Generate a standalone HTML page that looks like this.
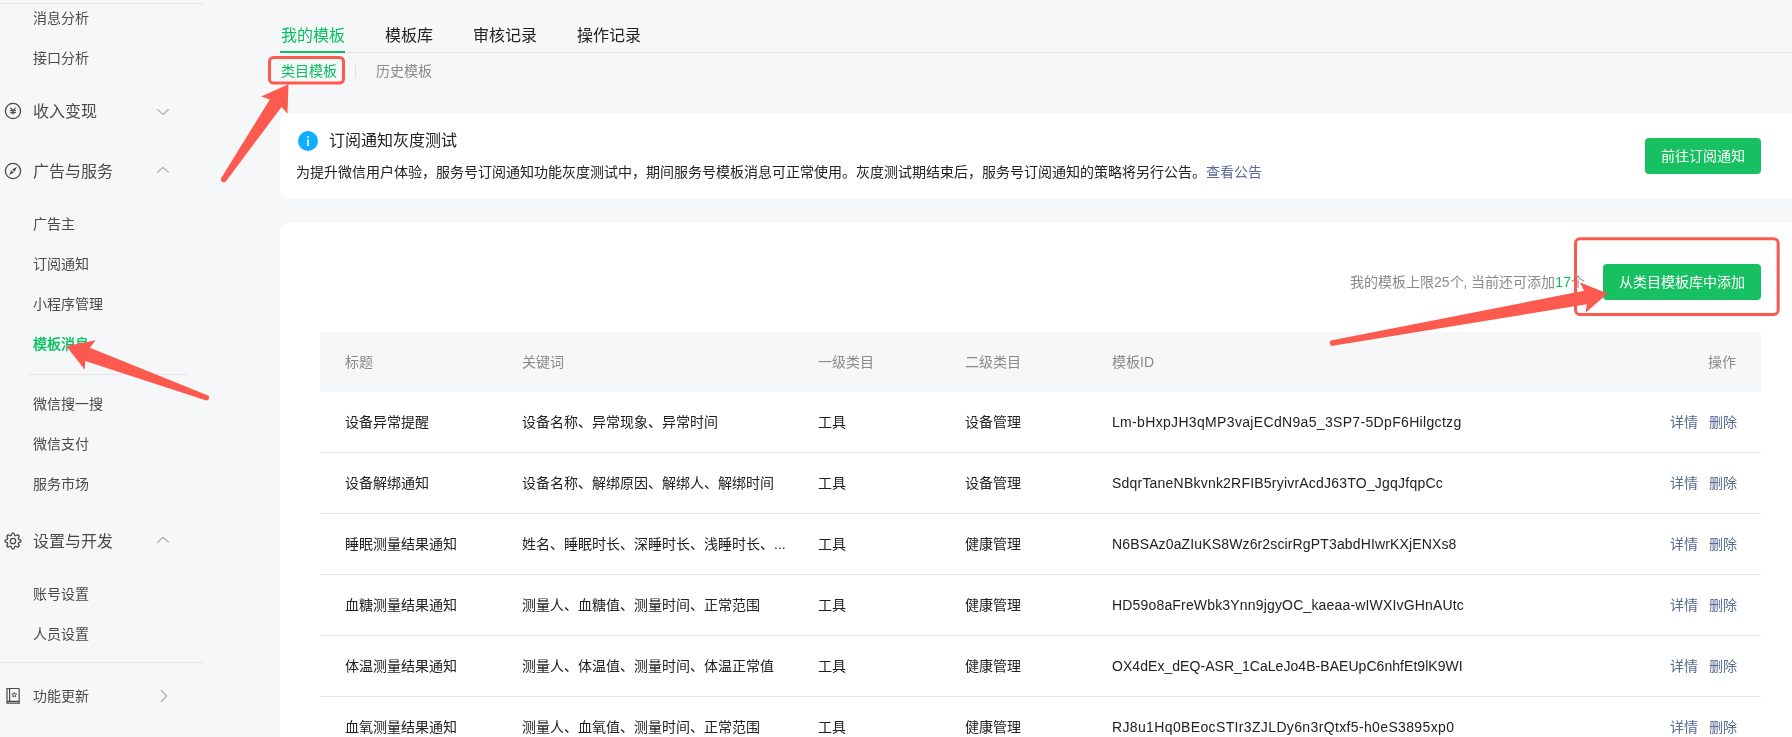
<!DOCTYPE html>
<html lang="zh-CN">
<head>
<meta charset="utf-8">
<style>
*{margin:0;padding:0;box-sizing:border-box}
html,body{width:1792px;height:737px;overflow:hidden;background:#f6f7f9}
body{position:relative;-webkit-font-smoothing:antialiased;font-family:"Liberation Sans",sans-serif;color:#353535}
.a{position:absolute;white-space:nowrap;line-height:1}
.side{font-size:14px;color:#4a4a4a}
.sec{font-size:16px;color:#4a4a4a}
.hr{position:absolute;height:1px;background:#e4e6e9}
.tab{font-size:16px;color:#222}
.card{position:absolute;background:#fff;border-radius:8px}
.btn{position:absolute;background:#17c161;color:#fff;font-size:14px;border-radius:4px;text-align:center}
.th{font-size:14px;color:#8a8a8a}
.td{font-size:14px;color:#222}
.lk{color:#576b95}
</style>
</head>
<body>
<div id="wrap" style="position:absolute;left:0;top:0;width:1792px;height:737px;will-change:transform">
<!-- sidebar -->
<div class="hr" style="left:0;top:3px;width:203px"></div>
<div class="a side" style="left:33px;top:11px">消息分析</div>
<div class="a side" style="left:33px;top:51px">接口分析</div>
<div class="a sec" style="left:33px;top:104px">收入变现</div>
<div class="a sec" style="left:33px;top:164px">广告与服务</div>
<div class="a side" style="left:33px;top:217px">广告主</div>
<div class="a side" style="left:33px;top:257px">订阅通知</div>
<div class="a side" style="left:33px;top:297px">小程序管理</div>
<div class="a side" style="left:33px;top:337px;color:#07c160;-webkit-text-stroke:0.4px #07c160">模板消息</div>
<div class="hr" style="left:29px;top:374px;width:158px"></div>
<div class="a side" style="left:33px;top:397px">微信搜一搜</div>
<div class="a side" style="left:33px;top:437px">微信支付</div>
<div class="a side" style="left:33px;top:477px">服务市场</div>
<div class="a sec" style="left:33px;top:534px">设置与开发</div>
<div class="a side" style="left:33px;top:587px">账号设置</div>
<div class="a side" style="left:33px;top:627px">人员设置</div>
<div class="hr" style="left:0;top:662px;width:203px"></div>
<div class="a side" style="left:33px;top:689px">功能更新</div>

<!-- tabs -->
<div class="a tab" style="left:281px;top:28px;color:#07c160">我的模板</div>
<div class="a tab" style="left:385px;top:28px">模板库</div>
<div class="a tab" style="left:473px;top:28px">审核记录</div>
<div class="a tab" style="left:577px;top:28px">操作记录</div>
<div class="hr" style="left:280px;top:52px;width:1512px;background:#e0e2e5"></div>
<div class="a" style="left:280px;top:51px;width:65px;height:2px;background:#07c160"></div>
<div class="a" style="left:281px;top:64px;font-size:14px;color:#07c160">类目模板</div>
<div class="a" style="left:355px;top:64px;width:1px;height:14px;background:#e0e2e5"></div>
<div class="a" style="left:376px;top:64px;font-size:14px;color:#8a8a8a">历史模板</div>

<!-- notice card -->
<div class="card" style="left:280px;top:113px;width:1520px;height:86px"></div>
<div class="a" style="left:329px;top:133px;font-size:16px;color:#222">订阅通知灰度测试</div>
<div class="a" style="left:296px;top:165px;font-size:14px;color:#222">为提升微信用户体验，服务号订阅通知功能灰度测试中，期间服务号模板消息可正常使用。灰度测试期结束后，服务号订阅通知的策略将另行公告。<span class="lk">查看公告</span></div>
<div class="btn" style="left:1645px;top:138px;width:116px;height:36px;line-height:36px">前往订阅通知</div>

<!-- main card -->
<div class="card" style="left:280px;top:223px;width:1520px;height:600px"></div>
<div class="a" style="left:1350px;top:275px;font-size:14px;color:#8a8a8a">我的模板上限25个, 当前还可添加<span style="color:#07c160">17</span>个</div>
<div class="btn" style="left:1603px;top:264px;width:158px;height:36px;line-height:36px">从类目模板库中添加</div>

<!-- table -->
<div class="a" style="left:320px;top:332px;width:1441px;height:60px;background:#f6f7f9"></div>
<div class="a th" style="left:345px;top:355px">标题</div>
<div class="a th" style="left:522px;top:355px">关键词</div>
<div class="a th" style="left:818px;top:355px">一级类目</div>
<div class="a th" style="left:965px;top:355px">二级类目</div>
<div class="a th" style="left:1112px;top:355px">模板ID</div>
<div class="a th" style="left:1708px;top:355px">操作</div>

<div class="a td" style="left:345px;top:415px">设备异常提醒</div>
<div class="a td" style="left:522px;top:415px">设备名称、异常现象、异常时间</div>
<div class="a td" style="left:818px;top:415px">工具</div>
<div class="a td" style="left:965px;top:415px">设备管理</div>
<div class="a td id" style="left:1112px;top:415px;letter-spacing:0.33px">Lm-bHxpJH3qMP3vajECdN9a5_3SP7-5DpF6Hilgctzg</div>
<div class="a td lk" style="left:1670px;top:415px">详情</div>
<div class="a td lk" style="left:1709px;top:415px">删除</div>
<div class="hr" style="left:320px;top:452px;width:1441px;background:#e7e7e7"></div>
<div class="a td" style="left:345px;top:476px">设备解绑通知</div>
<div class="a td" style="left:522px;top:476px">设备名称、解绑原因、解绑人、解绑时间</div>
<div class="a td" style="left:818px;top:476px">工具</div>
<div class="a td" style="left:965px;top:476px">设备管理</div>
<div class="a td id" style="left:1112px;top:476px;letter-spacing:0.21px">SdqrTaneNBkvnk2RFIB5ryivrAcdJ63TO_JgqJfqpCc</div>
<div class="a td lk" style="left:1670px;top:476px">详情</div>
<div class="a td lk" style="left:1709px;top:476px">删除</div>
<div class="hr" style="left:320px;top:513px;width:1441px;background:#e7e7e7"></div>
<div class="a td" style="left:345px;top:537px">睡眠测量结果通知</div>
<div class="a td" style="left:522px;top:537px">姓名、睡眠时长、深睡时长、浅睡时长、...</div>
<div class="a td" style="left:818px;top:537px">工具</div>
<div class="a td" style="left:965px;top:537px">健康管理</div>
<div class="a td id" style="left:1112px;top:537px;letter-spacing:0.14px">N6BSAz0aZIuKS8Wz6r2scirRgPT3abdHIwrKXjENXs8</div>
<div class="a td lk" style="left:1670px;top:537px">详情</div>
<div class="a td lk" style="left:1709px;top:537px">删除</div>
<div class="hr" style="left:320px;top:574px;width:1441px;background:#e7e7e7"></div>
<div class="a td" style="left:345px;top:598px">血糖测量结果通知</div>
<div class="a td" style="left:522px;top:598px">测量人、血糖值、测量时间、正常范围</div>
<div class="a td" style="left:818px;top:598px">工具</div>
<div class="a td" style="left:965px;top:598px">健康管理</div>
<div class="a td id" style="left:1112px;top:598px;letter-spacing:0.17px">HD59o8aFreWbk3Ynn9jgyOC_kaeaa-wIWXIvGHnAUtc</div>
<div class="a td lk" style="left:1670px;top:598px">详情</div>
<div class="a td lk" style="left:1709px;top:598px">删除</div>
<div class="hr" style="left:320px;top:635px;width:1441px;background:#e7e7e7"></div>
<div class="a td" style="left:345px;top:659px">体温测量结果通知</div>
<div class="a td" style="left:522px;top:659px">测量人、体温值、测量时间、体温正常值</div>
<div class="a td" style="left:818px;top:659px">工具</div>
<div class="a td" style="left:965px;top:659px">健康管理</div>
<div class="a td id" style="left:1112px;top:659px;letter-spacing:0.05px">OX4dEx_dEQ-ASR_1CaLeJo4B-BAEUpC6nhfEt9lK9WI</div>
<div class="a td lk" style="left:1670px;top:659px">详情</div>
<div class="a td lk" style="left:1709px;top:659px">删除</div>
<div class="hr" style="left:320px;top:696px;width:1441px;background:#e7e7e7"></div>
<div class="a td" style="left:345px;top:720px">血氧测量结果通知</div>
<div class="a td" style="left:522px;top:720px">测量人、血氧值、测量时间、正常范围</div>
<div class="a td" style="left:818px;top:720px">工具</div>
<div class="a td" style="left:965px;top:720px">健康管理</div>
<div class="a td id" style="left:1112px;top:720px;letter-spacing:0.36px">RJ8u1Hq0BEocSTIr3ZJLDy6n3rQtxf5-h0eS3895xp0</div>
<div class="a td lk" style="left:1670px;top:720px">详情</div>
<div class="a td lk" style="left:1709px;top:720px">删除</div>

<!-- sidebar icons -->
<svg class="a" style="left:0;top:90px" width="30" height="40" viewBox="0 90 30 40">
 <circle cx="13" cy="111" r="7.6" fill="none" stroke="#4a4a4a" stroke-width="1.3"/>
 <path d="M10.3 107.6 L13 110.6 L15.7 107.6 M10.2 110.6 H15.8 M10.2 112.6 H15.8 M13 110.6 V114.6" fill="none" stroke="#4a4a4a" stroke-width="1.1"/>
</svg>
<svg class="a" style="left:0;top:150px" width="30" height="40" viewBox="0 150 30 40">
 <circle cx="13" cy="171" r="7.6" fill="none" stroke="#4a4a4a" stroke-width="1.3"/>
 <path d="M16.8 167.1 L12.2 169.4 L14.6 171.8 Z M9.2 174.9 L11.4 170.2 L13.8 172.6 Z" fill="#4a4a4a"/>
</svg>
<svg class="a" style="left:0;top:520px" width="30" height="40" viewBox="0 520 30 40">
 <path fill="none" stroke="#4a4a4a" stroke-width="1.3" stroke-linejoin="round" d="M11.28 535.36 L12.04 533.16 L13.96 533.16 L14.72 535.36 L15.77 535.79 L17.86 534.77 L19.23 536.14 L18.21 538.23 L18.64 539.28 L20.84 540.04 L20.84 541.96 L18.64 542.72 L18.21 543.77 L19.23 545.86 L17.86 547.23 L15.77 546.21 L14.72 546.64 L13.96 548.84 L12.04 548.84 L11.28 546.64 L10.23 546.21 L8.14 547.23 L6.77 545.86 L7.79 543.77 L7.36 542.72 L5.16 541.96 L5.16 540.04 L7.36 539.28 L7.79 538.23 L6.77 536.14 L8.14 534.77 L10.23 535.79 Z"/>
 <circle cx="13" cy="541" r="2.7" fill="none" stroke="#4a4a4a" stroke-width="1.3"/>
</svg>
<svg class="a" style="left:0;top:680px" width="30" height="30" viewBox="0 680 30 30">
 <path d="M7 688.5 H18.5 Q19.2 688.5 19.2 689.2 V703.2 H7 Z M9.6 688.5 V701.3 M7 701.3 H19.2" fill="none" stroke="#4a4a4a" stroke-width="1.2"/>
 <path d="M14.2 692.3 L14.9 694 L16.6 694.1 L15.3 695.2 L15.7 696.9 L14.2 696 L12.7 696.9 L13.1 695.2 L11.8 694.1 L13.5 694 Z" fill="none" stroke="#4a4a4a" stroke-width="0.9" stroke-linejoin="round"/>
</svg>
<svg class="a" style="left:150px;top:100px" width="30" height="100" viewBox="150 100 30 100">
 <path d="M157.2 109.2 L163 114.4 L168.8 109.2" fill="none" stroke="#b2b2b2" stroke-width="1.3"/>
 <path d="M157.2 172.6 L163 167.4 L168.8 172.6" fill="none" stroke="#b2b2b2" stroke-width="1.3"/>
</svg>
<svg class="a" style="left:150px;top:530px" width="30" height="180" viewBox="150 530 30 180">
 <path d="M157.2 542.6 L163 537.4 L168.8 542.6" fill="none" stroke="#b2b2b2" stroke-width="1.3"/>
 <path d="M161.1 690.3 L166.5 696 L161.1 701.7" fill="none" stroke="#b2b2b2" stroke-width="1.3"/>
</svg>
<!-- info icon -->
<svg class="a" style="left:298px;top:131px" width="20" height="20" viewBox="0 0 20 20">
 <circle cx="10" cy="10" r="10" fill="#10aeff"/>
 <rect x="9.2" y="5.2" width="1.6" height="1.7" fill="#fff"/>
 <rect x="9.2" y="8.4" width="1.6" height="6.6" fill="#fff"/>
</svg>
<!-- annotations -->
<svg class="a" style="left:0;top:0;overflow:visible" width="1792" height="737" viewBox="0 0 1792 737">
 <g fill="none" stroke="#fc5a4e" stroke-width="3">
  <rect x="269.5" y="57.5" width="74" height="25.5" rx="4"/>
  <rect x="1575.5" y="238.7" width="202.7" height="75.7" rx="4.5"/>
 </g>
 <g fill="#fc5a4e">
  <path d="M221.40 177.67 L269.80 99.40 L261.10 96.50 L288.50 84.20 L287.50 113.80 L281.50 107.00 L226.20 180.93 A2.9 2.9 0 0 1 221.40 177.67 Z"/>
  <path d="M207.43 395.27 L89.90 347.80 L95.60 340.20 L66.20 346.10 L84.70 369.70 L85.20 361.10 L205.57 400.33 A2.7 2.7 0 0 0 207.43 395.27 Z"/>
  <path d="M1332.00 340.34 L1584.10 290.70 L1579.70 282.20 L1607.50 293.40 L1585.50 312.70 L1586.80 304.30 L1333.00 345.86 A2.8 2.8 0 0 1 1332.00 340.34 Z"/>
 </g>
</svg>

</div>
</body>
</html>
